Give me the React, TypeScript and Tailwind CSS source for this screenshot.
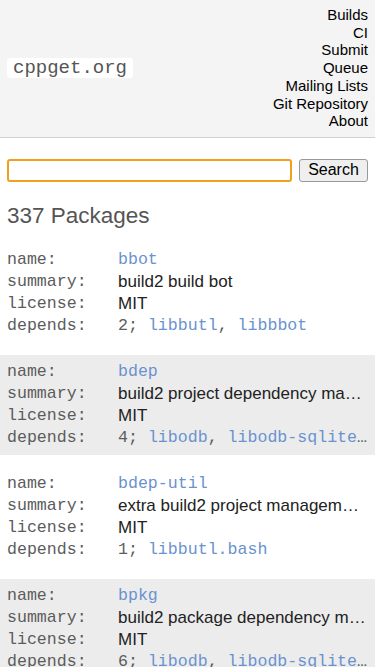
import React from 'react';

// ─────────────────────────────────────────────
// Data
// ─────────────────────────────────────────────

interface Pkg {
    name: string;
    summary: string;
    license: string;
    count: number;
    depends: string[];
}

const NAV = ['Builds', 'CI', 'Submit', 'Queue', 'Mailing Lists', 'Git Repository', 'About'];

const PACKAGES: Pkg[] = [
    { name: 'bbot', summary: 'build2 build bot', license: 'MIT', count: 2, depends: ['libbutl', 'libbbot'] },
    { name: 'bdep', summary: 'build2 project dependency manager', license: 'MIT', count: 4, depends: ['libodb', 'libodb-sqlite', 'libbutl', 'libbpkg'] },
    { name: 'bdep-util', summary: 'extra build2 project management utilities', license: 'MIT', count: 1, depends: ['libbutl.bash'] },
    { name: 'bpkg', summary: 'build2 package dependency manager', license: 'MIT', count: 6, depends: ['libodb', 'libodb-sqlite', 'libbutl', 'libbpkg'] },
];

const SANS = "font-['Liberation_Sans',Arial,sans-serif]";
const MONO = "font-['Liberation_Mono','Courier_New',monospace]";

// ─────────────────────────────────────────────
// Row of a package table
// ─────────────────────────────────────────────

function Row({ label, children, mono }: { label: string; children: React.ReactNode; mono?: boolean }) {
    return (
        <div className="flex h-[22px] items-center leading-[22px]">
            <span className={`${MONO} w-[111px] shrink-0 text-[16.6px] text-[#5c5c5c]`}>{label}</span>
            <span
                className={`min-w-0 flex-1 overflow-hidden text-ellipsis whitespace-nowrap ${
                    mono ? `${MONO} text-[16.6px] text-[#5c5c5c]` : `${SANS} text-[17px] text-[#222]`
                }`}
            >
                {children}
            </span>
        </div>
    );
}

function PackageCard({ pkg, shaded }: { pkg: Pkg; shaded: boolean }) {
    return (
        <div className={`py-[6px] pl-[7px] pr-[7px] ${shaded ? 'bg-[#ececec]' : 'bg-white'}`}>
            <Row label="name:" mono>
                <span className="text-[#6a92cf]">{pkg.name}</span>
            </Row>
            <Row label="summary:">{pkg.summary}</Row>
            <Row label="license:">{pkg.license}</Row>
            <Row label="depends:" mono>
                {pkg.count};{' '}
                {pkg.depends.map((d, i) => (
                    <React.Fragment key={d}>
                        <span className="text-[#6a92cf]">{d}</span>
                        {i < pkg.depends.length - 1 ? ', ' : ''}
                    </React.Fragment>
                ))}
            </Row>
        </div>
    );
}

// ─────────────────────────────────────────────
// Page
// ─────────────────────────────────────────────

export default function App() {
    return (
        <div className={`${SANS} min-h-[667px] w-[375px] overflow-hidden bg-white`}>
            {/* Header */}
            <header className="flex items-center justify-between border-b border-[#d0d0d0] bg-[#f4f4f4] pb-[7px] pl-[7px] pr-[7px] pt-[6px]">
                <div className="rounded-[3px] bg-white px-[6px]">
                    <span className={`${MONO} block text-[19px] leading-[20px] text-[#555]`}>cppget.org</span>
                </div>
                <nav className="flex flex-col items-end">
                    {NAV.map(item => (
                        <a key={item} className="text-[15px] leading-[17.7px] text-black">
                            {item}
                        </a>
                    ))}
                </nav>
            </header>

            {/* Search */}
            <div className="flex items-center gap-[7px] px-[7px] pt-[21px]">
                <input
                    type="text"
                    className="h-[23px] min-w-0 flex-1 rounded-[3px] border-2 border-[#f0a020] bg-white outline-none"
                />
                <button className="h-[23px] w-[69px] rounded-[3px] border border-[#999] bg-[#efefef] text-[16px] leading-none text-black">
                    Search
                </button>
            </div>

            {/* Count */}
            <h1 className="px-[7px] pt-[20px] text-[22.5px] leading-[28px] text-[#555]">337 Packages</h1>

            {/* Packages */}
            <div className="mt-[13px] flex flex-col gap-[12px]">
                {PACKAGES.map((p, i) => (
                    <PackageCard key={p.name} pkg={p} shaded={i % 2 === 1} />
                ))}
            </div>
        </div>
    );
}
